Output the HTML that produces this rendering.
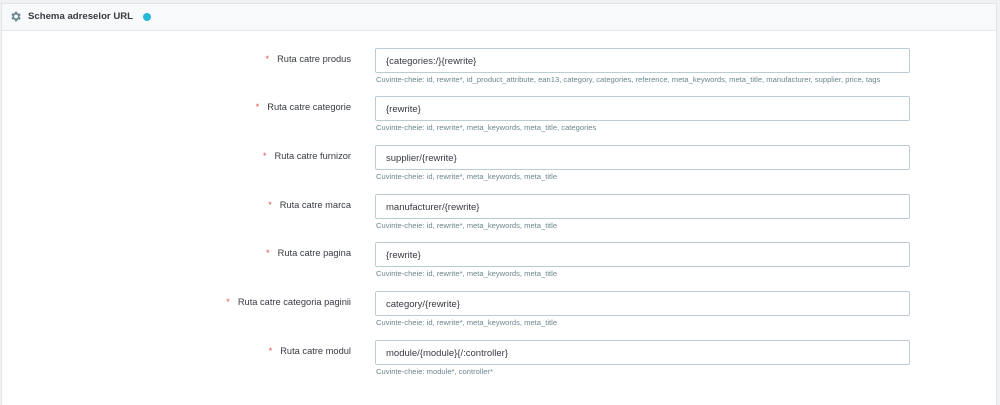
<!DOCTYPE html>
<html><head><style>
body{margin:0;background:#eff1f2;font-family:"Liberation Sans",sans-serif;}
.panel{position:absolute;left:1px;top:3px;width:996px;height:402px;background:#fff;border:1px solid #e1e6e8;border-bottom:none;box-sizing:border-box}
.hd{height:26px;background:#f8f9fa;border-bottom:1px solid #e4e8ea;position:relative}
.hd .t{position:absolute;left:26px;top:7px;font-size:9.6px;font-weight:bold;color:#363a41}
.hd .i{position:absolute;left:141px;top:9px;width:8px;height:8px;border-radius:50%;background:#25b9d7}
.row{position:absolute;left:0;width:1000px}
.lbl{position:absolute;right:649px;top:6px;font-size:9.3px;color:#363a41;white-space:nowrap}
.lbl b{color:#e0564d;font-weight:normal;margin-right:8px}
.inp{position:absolute;left:375px;top:0;width:535px;height:25px;border:1px solid #bbcdd2;border-radius:2px;box-sizing:border-box;font-size:9.5px;color:#363a41;padding:7px 0 0 10px}
.hp{position:absolute;left:376px;top:27px;font-size:7.6px;color:#6c868e;white-space:nowrap}
</style></head><body>
<div class="panel"><div class="hd">
<svg style="position:absolute;left:7px;top:6px" width="13" height="13" viewBox="0 0 24 24"><path fill="#6c868e" d="M19.4 13a7.6 7.6 0 000-2l2.1-1.6-2-3.5-2.5 1a7.5 7.5 0 00-1.7-1L15 3h-4l-.4 2.7a7.5 7.5 0 00-1.7 1l-2.5-1-2 3.5L6.6 11a7.6 7.6 0 000 2l-2.1 1.6 2 3.5 2.5-1a7.5 7.5 0 001.7 1L11 21h4l.4-2.7a7.5 7.5 0 001.7-1l2.5 1 2-3.5zM13 15.5a3.5 3.5 0 110-7 3.5 3.5 0 010 7z"/></svg>
<span class="t">Schema adreselor URL</span><span class="i"></span></div></div>
<div class="row" style="top:48px"><div class="lbl"><b>*</b>Ruta catre produs</div><div class="inp">{categories:/}{rewrite}</div><div class="hp">Cuvinte-cheie: id, rewrite*, id_product_attribute, ean13, category, categories, reference, meta_keywords, meta_title, manufacturer, supplier, price, tags</div></div>
<div class="row" style="top:96px"><div class="lbl"><b>*</b>Ruta catre categorie</div><div class="inp">{rewrite}</div><div class="hp">Cuvinte-cheie: id, rewrite*, meta_keywords, meta_title, categories</div></div>
<div class="row" style="top:145px"><div class="lbl"><b>*</b>Ruta catre furnizor</div><div class="inp">supplier/{rewrite}</div><div class="hp">Cuvinte-cheie: id, rewrite*, meta_keywords, meta_title</div></div>
<div class="row" style="top:194px"><div class="lbl"><b>*</b>Ruta catre marca</div><div class="inp">manufacturer/{rewrite}</div><div class="hp">Cuvinte-cheie: id, rewrite*, meta_keywords, meta_title</div></div>
<div class="row" style="top:242px"><div class="lbl"><b>*</b>Ruta catre pagina</div><div class="inp">{rewrite}</div><div class="hp">Cuvinte-cheie: id, rewrite*, meta_keywords, meta_title</div></div>
<div class="row" style="top:291px"><div class="lbl"><b>*</b>Ruta catre categoria paginii</div><div class="inp">category/{rewrite}</div><div class="hp">Cuvinte-cheie: id, rewrite*, meta_keywords, meta_title</div></div>
<div class="row" style="top:340px"><div class="lbl"><b>*</b>Ruta catre modul</div><div class="inp">module/{module}{/:controller}</div><div class="hp">Cuvinte-cheie: module*, controller*</div></div>
</body></html>
